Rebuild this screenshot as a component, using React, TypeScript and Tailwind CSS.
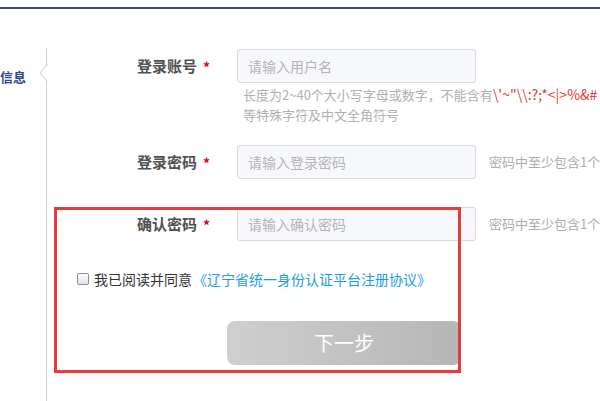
import React from 'react';

const font = { fontFamily: '"Microsoft YaHei", "Noto Sans CJK SC", "Noto Sans", sans-serif' };

const FormRow: React.FC<{ label: string; placeholder: string; hint?: string; className?: string }> = ({ label, placeholder, hint, className }) => (
  <div className={`flex items-center ${className ?? ''}`}>
    <span className="w-[150px] text-right text-[15px] font-bold text-[#505050]">{label}</span>
    <span className="w-[40px] pl-[6px] pt-[3px] text-[14px] font-bold text-[#d9001b]">*</span>
    <div className="flex h-[34px] w-[239px] items-center rounded-[3px] border border-[#d8dae2] bg-[#f7f8fc] pl-[10px] text-[14px] text-[#b4b4b4]">
      {placeholder}
    </div>
    {hint && <span className="ml-[13px] whitespace-nowrap text-[13px] text-[#adadad]">{hint}</span>}
  </div>
);

export default function App() {
  return (
    <div className="relative h-[401px] w-[600px] overflow-hidden bg-white" style={font}>
      <div className="mt-[7px] h-[2px] bg-[#3d4876]" />
      <div className="mt-[40px] flex">
        <div className="w-[46px] shrink-0 pt-[14px]">
          <span className="whitespace-nowrap text-[13px] font-bold text-[#2d4a8a]">信息</span>
        </div>
        <div className="relative h-[360px] flex-1 border-l border-[#c6cede]">
          <svg className="absolute left-[-8px] top-[15px]" width="9" height="18" viewBox="0 0 9 18">
            <path d="M8.5 0 L1 9 L8.5 18" fill="white" stroke="#c6cede" strokeWidth="1" />
            <rect x="8" y="1" width="2" height="16" fill="white" />
          </svg>

          <FormRow label="登录账号" placeholder="请输入用户名" />
          <div className="ml-[196px] mt-[1px] text-[13px] leading-[20px] text-[#b0b0b0] whitespace-nowrap">
            <div>
              长度为2~40个大小写字母或数字，不能含有<span className="text-[14px] text-[#e53935]">\'~"\\:?;*&lt;|&gt;%&amp;#</span>
            </div>
            <div>等特殊字符及中文全角符号</div>
          </div>

          <FormRow label="登录密码" placeholder="请输入登录密码" hint="密码中至少包含1个大写字母" className="mt-[20px]" />
          <FormRow label="确认密码" placeholder="请输入确认密码" hint="密码中至少包含1个大写字母" className="mt-[28px]" />

          <div className="mt-[28px] flex items-center pl-[30px] leading-[20px]">
            <span className="h-[12px] w-[12px] rounded-[2px] border border-[#8f8f8f] bg-gradient-to-b from-[#fdfdfd] to-[#e2e2e2]" />
            <span className="ml-[5px] text-[14px] text-[#333]">我已阅读并同意</span>
            <span className="ml-[1px] text-[14px] text-[#1c9de2]">《辽宁省统一身份认证平台注册协议》</span>
          </div>

          <div className="ml-[180px] mt-[32px] flex h-[44px] w-[234px] items-center justify-center rounded-[8px] bg-gradient-to-r from-[#cfcfcf] to-[#b6b6b6] text-[20px] text-white">
            下一步
          </div>
        </div>
      </div>

      <div className="absolute left-[54px] top-[207px] h-[166px] w-[407px] border-[3px] border-[#e63b3e]" />
    </div>
  );
}
